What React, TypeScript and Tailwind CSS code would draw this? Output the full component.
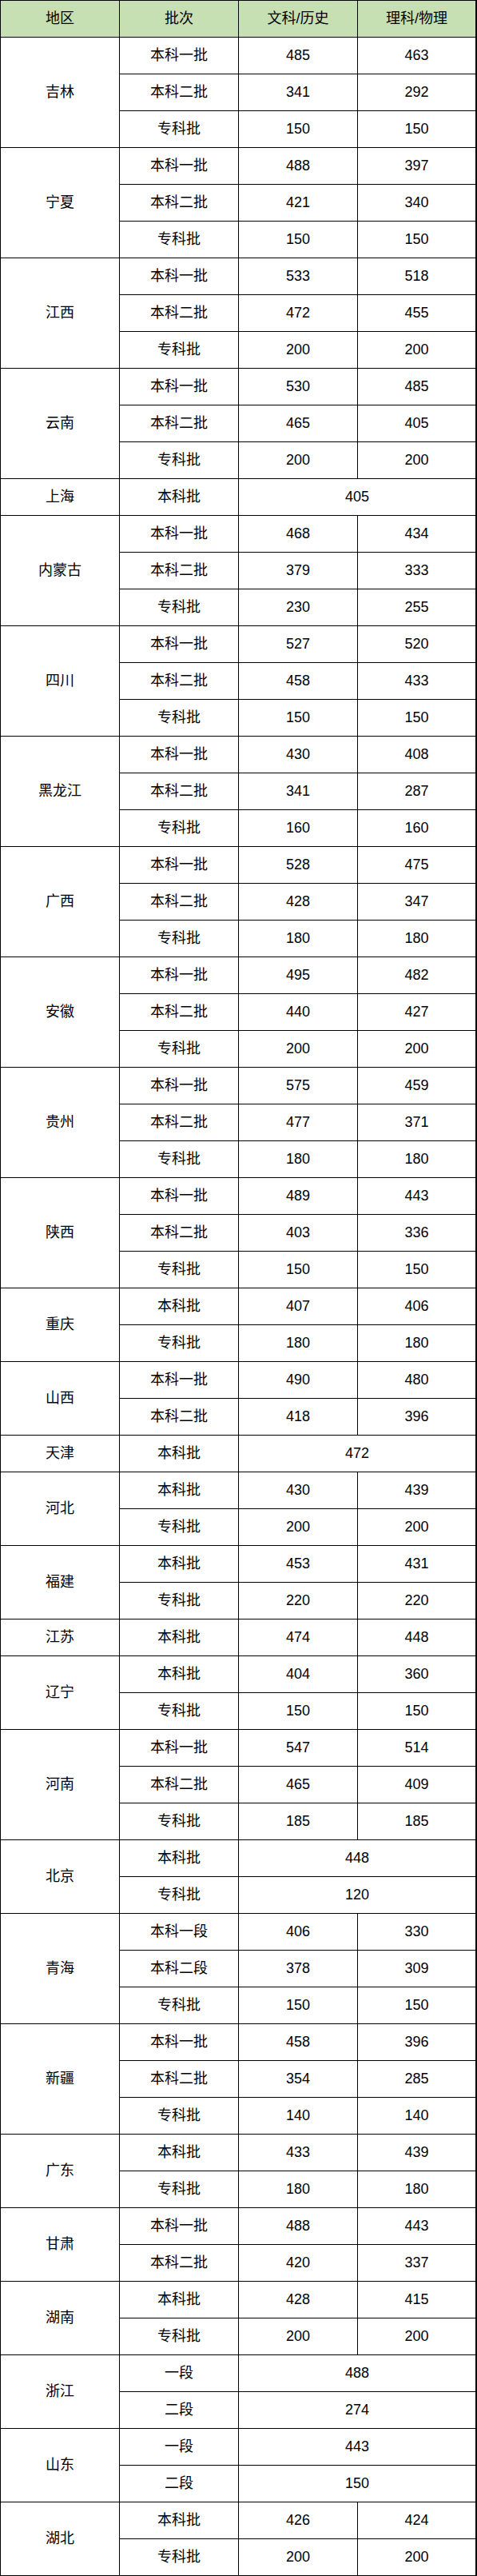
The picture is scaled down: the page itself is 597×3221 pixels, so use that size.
type Row = [string, string, string?];
type Region = { name: string; rows: Row[] };

const regions: Region[] = [
  { name: "吉林", rows: [["本科一批", "485", "463"], ["本科二批", "341", "292"], ["专科批", "150", "150"]] },
  { name: "宁夏", rows: [["本科一批", "488", "397"], ["本科二批", "421", "340"], ["专科批", "150", "150"]] },
  { name: "江西", rows: [["本科一批", "533", "518"], ["本科二批", "472", "455"], ["专科批", "200", "200"]] },
  { name: "云南", rows: [["本科一批", "530", "485"], ["本科二批", "465", "405"], ["专科批", "200", "200"]] },
  { name: "上海", rows: [["本科批", "405"]] },
  { name: "内蒙古", rows: [["本科一批", "468", "434"], ["本科二批", "379", "333"], ["专科批", "230", "255"]] },
  { name: "四川", rows: [["本科一批", "527", "520"], ["本科二批", "458", "433"], ["专科批", "150", "150"]] },
  { name: "黑龙江", rows: [["本科一批", "430", "408"], ["本科二批", "341", "287"], ["专科批", "160", "160"]] },
  { name: "广西", rows: [["本科一批", "528", "475"], ["本科二批", "428", "347"], ["专科批", "180", "180"]] },
  { name: "安徽", rows: [["本科一批", "495", "482"], ["本科二批", "440", "427"], ["专科批", "200", "200"]] },
  { name: "贵州", rows: [["本科一批", "575", "459"], ["本科二批", "477", "371"], ["专科批", "180", "180"]] },
  { name: "陕西", rows: [["本科一批", "489", "443"], ["本科二批", "403", "336"], ["专科批", "150", "150"]] },
  { name: "重庆", rows: [["本科批", "407", "406"], ["专科批", "180", "180"]] },
  { name: "山西", rows: [["本科一批", "490", "480"], ["本科二批", "418", "396"]] },
  { name: "天津", rows: [["本科批", "472"]] },
  { name: "河北", rows: [["本科批", "430", "439"], ["专科批", "200", "200"]] },
  { name: "福建", rows: [["本科批", "453", "431"], ["专科批", "220", "220"]] },
  { name: "江苏", rows: [["本科批", "474", "448"]] },
  { name: "辽宁", rows: [["本科批", "404", "360"], ["专科批", "150", "150"]] },
  { name: "河南", rows: [["本科一批", "547", "514"], ["本科二批", "465", "409"], ["专科批", "185", "185"]] },
  { name: "北京", rows: [["本科批", "448"], ["专科批", "120"]] },
  { name: "青海", rows: [["本科一段", "406", "330"], ["本科二段", "378", "309"], ["专科批", "150", "150"]] },
  { name: "新疆", rows: [["本科一批", "458", "396"], ["本科二批", "354", "285"], ["专科批", "140", "140"]] },
  { name: "广东", rows: [["本科批", "433", "439"], ["专科批", "180", "180"]] },
  { name: "甘肃", rows: [["本科一批", "488", "443"], ["本科二批", "420", "337"]] },
  { name: "湖南", rows: [["本科批", "428", "415"], ["专科批", "200", "200"]] },
  { name: "浙江", rows: [["一段", "488"], ["二段", "274"]] },
  { name: "山东", rows: [["一段", "443"], ["二段", "150"]] },
  { name: "湖北", rows: [["本科批", "426", "424"], ["专科批", "200", "200"]] },
];

const cell = "border border-black text-center align-middle p-0";

export default function App() {
  return (
    <div
      className="w-[597px] bg-white text-[18px] text-black"
      style={{ fontFamily: '"Liberation Sans", "Noto Sans CJK SC", sans-serif' }}
    >
      <table className="w-[597px] table-fixed border-collapse border-r-2 border-b-2 border-black">
        <colgroup>
          <col className="w-[149px]" />
          <col className="w-[149px]" />
          <col className="w-[149px]" />
          <col />
        </colgroup>
        <thead>
          <tr className="h-[46px] bg-[#c6e0b4]">
            <th className={`${cell} font-normal`}>地区</th>
            <th className={`${cell} font-normal`}>批次</th>
            <th className={`${cell} font-normal`}>文科/历史</th>
            <th className={`${cell} font-normal`}>理科/物理</th>
          </tr>
        </thead>
        <tbody>
          {regions.map((region) =>
            region.rows.map(([batch, a, b], i) => (
              <tr key={`${region.name}-${i}`} className="h-[46px]">
                {i === 0 ? (
                  <td className={cell} rowSpan={region.rows.length}>
                    {region.name}
                  </td>
                ) : null}
                <td className={cell}>{batch}</td>
                {b === undefined ? (
                  <td className={cell} colSpan={2}>
                    {a}
                  </td>
                ) : (
                  <>
                    <td className={cell}>{a}</td>
                    <td className={cell}>{b}</td>
                  </>
                )}
              </tr>
            ))
          )}
        </tbody>
      </table>
    </div>
  );
}
